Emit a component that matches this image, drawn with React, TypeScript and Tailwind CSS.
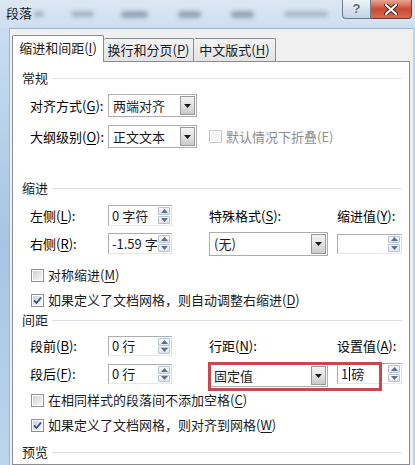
import React from 'react';

const U = ({ k }: { k: string }) => <span className="underline underline-offset-[2px] decoration-[1px]">{k}</span>;

function Tri({ dir = 'down', color = '#1a1a1a' }: { dir?: 'up' | 'down'; color?: string }) {
  return (
    <svg width="7" height="4" viewBox="0 0 7 4">
      {dir === 'down' ? <path d="M0 0 H7 L3.5 4 Z" fill={color} /> : <path d="M0 4 H7 L3.5 0 Z" fill={color} />}
    </svg>
  );
}

function Select({ text, w, h }: { text: string; w: string; h: string }) {
  return (
    <div className={`${w} ${h} flex items-stretch border border-[#adadad] bg-white`}>
      <span className="flex-1 flex items-center pl-[4px] text-[#1b1b1b]">{text}</span>
      <span className="w-[15px] m-[1px] border border-[#9a9a9a] bg-linear-to-b from-[#f3f3f3] via-[#e3e3e3] to-[#c9c9c9] flex items-center justify-center">
        <Tri />
      </span>
    </div>
  );
}

function Spin({ children, w, h }: { children?: React.ReactNode; w: string; h: string }) {
  return (
    <div className={`${w} ${h} flex items-stretch border border-[#abadb3] border-b-[#e3e9ef] border-r-[#dbdfe6] bg-white`}>
      <span className="flex-1 flex items-center pl-[3px] overflow-hidden whitespace-nowrap text-[#1b1b1b]">{children}</span>
      <span className="w-[13px] flex flex-col gap-px py-[1px] pr-[1px]">
        <span className="flex-1 border border-[#b9c2cf] rounded-[1px] bg-linear-to-b from-[#f7f9fb] to-[#dfe5ec] flex items-center justify-center">
          <Tri dir="up" color="#5a6e92" />
        </span>
        <span className="flex-1 border border-[#b9c2cf] rounded-[1px] bg-linear-to-b from-[#f7f9fb] to-[#dfe5ec] flex items-center justify-center">
          <Tri color="#5a6e92" />
        </span>
      </span>
    </div>
  );
}

function Check({ checked, disabled }: { checked?: boolean; disabled?: boolean }) {
  return (
    <span className={`w-[13px] h-[13px] shrink-0 border ${disabled ? 'border-[#c9c9c9]' : 'border-[#8e8f8f]'} bg-white p-[1px] flex`}>
      <span className={`flex-1 flex items-center justify-center ${disabled ? 'bg-[#f4f4f4]' : 'bg-linear-to-br from-[#cfd2d6] to-[#f7f7f7]'}`}>
        {checked && (
          <svg width="9" height="9" viewBox="0 0 9 9">
            <path d="M1 4.5 L3.5 7 L8 1.5" fill="none" stroke="#34508a" strokeWidth="1.8" />
          </svg>
        )}
      </span>
    </span>
  );
}

function Heading({ title }: { title: string }) {
  return (
    <div className="h-[16px] flex items-center pl-[9px] pr-[7px]">
      <span className="text-[#1b1b1b]">{title}</span>
      <span className="flex-1 h-px bg-[#dcdfe3] ml-[4px]" />
    </div>
  );
}

function CheckRow({ checked, children }: { checked?: boolean; children: React.ReactNode }) {
  return (
    <div className="h-[18px] flex items-center pl-[18px] gap-[4px]">
      <Check checked={checked} />
      <span className="text-[#1b1b1b]">{children}</span>
    </div>
  );
}

export default function App() {
  return (
    <div className="w-[415px] h-[465px] overflow-hidden flex flex-col bg-[#c4d8ed] text-[13px] leading-[16px] font-[family-name:Noto_Sans_CJK_SC,sans-serif]">
      {/* glass title bar */}
      <div className="h-[28px] shrink-0 flex items-start bg-linear-to-b from-[#dce8f4] to-[#cddfef]">
        <span className="pl-[6px] pt-[5px] text-[#1a1a1a]">段落</span>
        <div className="flex-1 h-[28px] flex items-center">
          <span className="ml-[2px] w-[10px] h-[6px] rounded-full bg-[#8795a5] opacity-60 blur-[2px]" />
          <span className="ml-[27px] w-[23px] h-[6px] rounded-full bg-[#8795a5] opacity-60 blur-[2px]" />
          <span className="ml-[27px] w-[27px] h-[7px] rounded-full bg-[#7b8a9b] opacity-70 blur-[2px]" />
          <span className="ml-[30px] w-[23px] h-[7px] rounded-full bg-[#7b8a9b] opacity-70 blur-[2px]" />
          <span className="ml-[30px] w-[23px] h-[7px] rounded-full bg-[#7b8a9b] opacity-70 blur-[2px]" />
          <span className="ml-[30px] w-[44px] h-[6px] rounded-full bg-[#8795a5] opacity-55 blur-[2px]" />
        </div>
        <div className="w-[29px] h-[19px] border border-t-0 border-[#6d7b8c] rounded-bl-[4px] bg-linear-to-b from-[#eef3f8] to-[#c5d3e2] flex items-center justify-center">
          <span className="text-[13px] font-bold text-[#5d6977] [text-shadow:0_0_2px_#fff] font-[family-name:Liberation_Sans,sans-serif]">?</span>
        </div>
        <div className="w-[41px] h-[19px] mr-[3px] border border-t-0 border-l-0 border-[#6b3a34] rounded-br-[4px] bg-linear-to-b from-[#e9a493] via-[#c94a33] to-[#d86a4f] flex items-center justify-center">
          <svg width="14" height="11" viewBox="0 0 14 11">
            <path d="M2 1 L12 10 M12 1 L2 10" stroke="#4a1d16" strokeWidth="4" strokeLinecap="round" />
            <path d="M2 1 L12 10 M12 1 L2 10" stroke="#ffffff" strokeWidth="2.2" strokeLinecap="round" />
          </svg>
        </div>
      </div>

      <div className="flex-1 flex">
        <div className="w-[9px] shrink-0 bg-linear-to-b from-[#c9dcef] via-[#a6c4e4] to-[#bcd5ee]" />
        <div className="w-[404px] flex flex-col bg-[#f0f0f0] border-l border-t border-[#a3b4c6] pl-[2px] pt-[6px]">
          {/* tabs */}
          <div className="h-[27px] flex items-end -mb-px relative z-10">
            <div className="w-[92px] h-[27px] border border-b-0 border-[#898c95] rounded-t-[2px] bg-white flex items-center justify-center pb-[2px] text-[#1b1b1b]">
              <span>缩进和间距(<U k="I" />)</span>
            </div>
            <div className="w-[90px] h-[23px] mb-px border border-l-0 border-b-0 border-[#898c95] rounded-t-[2px] bg-linear-to-b from-[#f3f3f3] to-[#e3e3e3] flex items-center justify-center text-[#1b1b1b]">
              <span>换行和分页(<U k="P" />)</span>
            </div>
            <div className="w-[82px] h-[23px] mb-px border border-l-0 border-b-0 border-[#898c95] rounded-t-[2px] bg-linear-to-b from-[#f3f3f3] to-[#e3e3e3] flex items-center justify-center text-[#1b1b1b]">
              <span>中文版式(<U k="H" />)</span>
            </div>
          </div>

          {/* tab page */}
          <div className="w-[398px] flex-1 border border-[#898c95] bg-white pt-[8px] flex flex-col">
            <Heading title="常规" />
            <div className="mt-[8px] h-[23px] flex items-center pl-[17px]">
              <span className="w-[78px]">对齐方式(<U k="G" />):</span>
              <Select text="两端对齐" w="w-[89px]" h="h-[23px]" />
            </div>
            <div className="mt-[8px] h-[23px] flex items-center pl-[17px]">
              <span className="w-[78px]">大纲级别(<U k="O" />):</span>
              <Select text="正文文本" w="w-[89px]" h="h-[23px]" />
              <span className="ml-[12px] flex items-center gap-[4px] text-[#8d8d8d]">
                <Check disabled />
                默认情况下折叠(E)
              </span>
            </div>

            <div className="mt-[32px]">
              <Heading title="缩进" />
            </div>
            <div className="mt-[9px] h-[21px] flex items-center pl-[17px]">
              <span className="w-[78px]">左侧(<U k="L" />):</span>
              <Spin w="w-[64px]" h="h-[21px]">0 字符</Spin>
              <span className="ml-[37px] w-[128px]">特殊格式(<U k="S" />):</span>
              <span>缩进值(<U k="Y" />):</span>
            </div>
            <div className="mt-[5px] h-[25px] flex items-center pl-[17px]">
              <span className="w-[78px]">右侧(<U k="R" />):</span>
              <Spin w="w-[64px]" h="h-[21px]">-1.59 字</Spin>
              <span className="ml-[37px]">
                <Select text="(无)" w="w-[119px]" h="h-[24px]" />
              </span>
              <span className="ml-[9px]">
                <Spin w="w-[65px]" h="h-[20px]" />
              </span>
            </div>
            <div className="mt-[10px]">
              <CheckRow>对称缩进(<U k="M" />)</CheckRow>
            </div>
            <div className="mt-[7px]">
              <CheckRow checked>如果定义了文档网格，则自动调整右缩进(<U k="D" />)</CheckRow>
            </div>

            <div className="mt-[3px]">
              <Heading title="间距" />
            </div>
            <div className="mt-[8px] h-[20px] flex items-center pl-[17px]">
              <span className="w-[78px]">段前(<U k="B" />):</span>
              <Spin w="w-[64px]" h="h-[20px]">0 行</Spin>
              <span className="ml-[37px] w-[128px]">行距(<U k="N" />):</span>
              <span>设置值(<U k="A" />):</span>
            </div>
            <div className="mt-[8px] h-[23px] flex items-start pl-[17px] relative">
              <span className="w-[78px] h-[20px] flex items-center">段后(<U k="F" />):</span>
              <Spin w="w-[64px]" h="h-[20px]">0 行</Spin>
              <span className="ml-[37px]">
                <Select text="固定值" w="w-[119px]" h="h-[23px]" />
              </span>
              <span className="ml-[9px] -mt-[1px]">
                <Spin w="w-[65px]" h="h-[21px]">
                  1<span className="w-px h-[14px] bg-black mx-[1px]" />磅
                </Spin>
              </span>
              {/* red annotation box */}
              <span className="absolute left-[195px] top-[-2px] w-[174px] h-[29px] border-[3px] border-[#cb4750] pointer-events-none" />
            </div>
            <div className="mt-[4px]">
              <CheckRow>在相同样式的段落间不添加空格(<U k="C" />)</CheckRow>
            </div>
            <div className="mt-[7px]">
              <CheckRow checked>如果定义了文档网格，则对齐到网格(<U k="W" />)</CheckRow>
            </div>

            <div className="mt-[10px]">
              <Heading title="预览" />
            </div>
          </div>
        </div>
        <div className="w-[2px] shrink-0 bg-[#bcd2e9]" />
      </div>
    </div>
  );
}
